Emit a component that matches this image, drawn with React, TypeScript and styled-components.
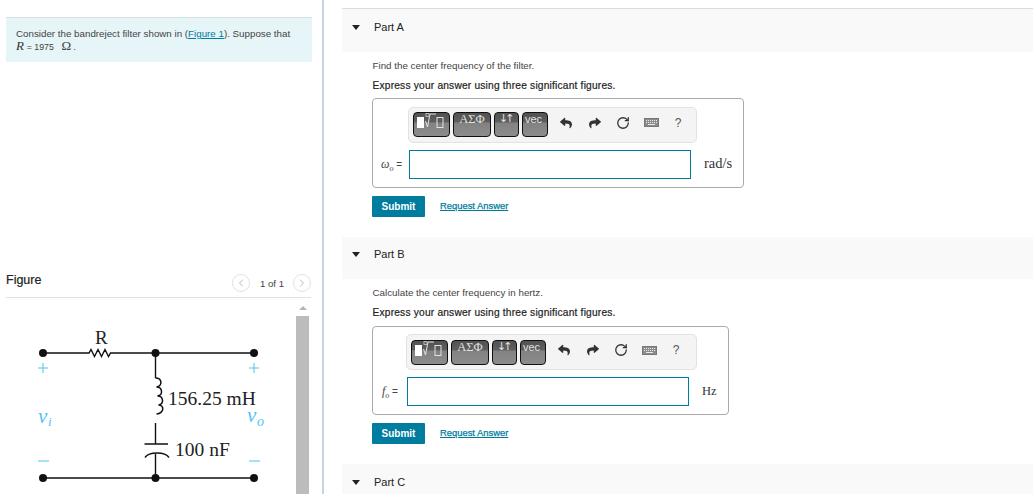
import styled, { createGlobalStyle } from "styled-components";
import { FaReply, FaShare } from "react-icons/fa";
import { ChevronLeft, ChevronRight, RotateCw } from "lucide-react";

const GlobalStyle = createGlobalStyle`
  html, body {
    margin: 0;
    padding: 0;
    height: 494px;
    overflow: hidden;
    background: #fff;
    font-family: "Liberation Sans", Arial, sans-serif;
    color: #333;
  }
`;

const Page = styled.div`
  display: flex;
  height: 494px;
  overflow: hidden;
`;

const LeftColumn = styled.div`
  width: 324px;
  flex: none;
  box-sizing: border-box;
  padding: 17px 11px 0 6px;
  display: flex;
  flex-direction: column;
  border-right: 2px solid #c3d4e4;
`;

const Intro = styled.div`
  height: 45px;
  box-sizing: border-box;
  width: 306px;
  background: #e6f5f7;
  border-top: 1px solid #d8e0e4;
  padding: 10px 10px 0;
  font-size: 9.77px;
  line-height: 12px;
  color: #444;
`;

const Link = styled.a`
  color: #007c9b;
  text-decoration: underline;
`;

const MathVar = styled.i`
  font-family: "Liberation Serif", serif;
  font-size: 13px;
  color: #333;
`;

const MathValue = styled.span`
  font-size: 8.8px;
`;

const Omega = styled.span`
  font-family: "Liberation Serif", serif;
  font-size: 13px;
  margin: 0 2px 0 5px;
`;

const FigureHeader = styled.div`
  margin-top: 206px;
  height: 30px;
  width: 305px;
  box-sizing: border-box;
  flex: none;
  display: flex;
  align-items: flex-start;
  padding-top: 5px;
  border-bottom: 1px solid #dfe3e6;
`;

const FigureTitle = styled.div`
  font-size: 12.5px;
  line-height: 14px;
  color: #222;
  flex: 1;
  -webkit-text-stroke: 0.2px #222;
`;

const Pager = styled.div`
  display: flex;
  align-items: center;
  margin-top: 1px;
  font-size: 9.6px;
  color: #444;
`;

const PagerButton = styled.span`
  width: 18px;
  height: 18px;
  box-sizing: border-box;
  border: 1px solid #e2e2e2;
  border-radius: 50%;
  display: flex;
  align-items: center;
  justify-content: center;
  color: #b9b9b9;
`;

const PagerText = styled.span`
  margin: 0 9px 0 10px;
`;

const FigureBody = styled.div`
  display: flex;
  width: 305px;
  flex: 1;
  min-height: 0;
`;

const CircuitSvg = styled.svg`
  width: 290px;
  height: 196px;
  flex: none;
  display: block;
`;

const ScrollTrack = styled.div`
  width: 13px;
  display: flex;
  flex-direction: column;
  align-items: center;
`;

const ScrollArrow = styled.div`
  width: 0;
  height: 0;
  margin: 8px 0 6px;
  border-left: 4px solid transparent;
  border-right: 4px solid transparent;
  border-bottom: 4px solid #b5b5b5;
`;

const ScrollThumb = styled.div`
  width: 13px;
  flex: 1;
  background: #bcbcbc;
`;

const RightColumn = styled.div`
  flex: 1;
  min-width: 0;
  padding: 8.4px 0 0 18px;
`;

const PartHeader = styled.div<{ $ruled?: boolean }>`
  height: ${(p) => (p.$ruled ? "43.4px" : "42.4px")};
  box-sizing: border-box;
  background: #f9f9f9;
  border-top: ${(p) => (p.$ruled ? "1px solid #dcdcdc" : "none")};
  display: flex;
  align-items: flex-start;
`;

const Caret = styled.span`
  width: 0;
  height: 0;
  margin: 15.5px 14px 0 10px;
  border-left: 4px solid transparent;
  border-right: 4px solid transparent;
  border-top: 5px solid #222;
`;

const PartTitle = styled.span`
  font-size: 11px;
  line-height: 13px;
  margin-top: 11.4px;
  color: #222;
`;

const PartBody = styled.div`
  padding: 7px 0 20.2px 30px;
`;

const Prompt = styled.div`
  font-size: 9.8px;
  line-height: 13px;
  color: #444;
  padding-left: 0.5px;
`;

const Instruction = styled.div`
  margin-top: 7px;
  padding-left: 0.5px;
  font-size: 10.2px;
  line-height: 13px;
  color: #222;
  letter-spacing: 0.2px;
  -webkit-text-stroke: 0.2px #222;
`;

const AnswerBox = styled.div<{ $padLeft: number }>`
  margin-top: 6.4px;
  display: inline-grid;
  grid-template-columns: auto 282px auto;
  column-gap: 7px;
  row-gap: 7px;
  align-items: center;
  border: 1px solid #aaa;
  border-radius: 4px;
  padding: 7.6px 11px 8px ${(p) => p.$padLeft}px;
  vertical-align: top;
`;

const Toolbar = styled.div<{ $width: number }>`
  grid-column: 2 / 4;
  margin-left: -1px;
  width: ${(p) => p.$width}px;
  height: 36px;
  box-sizing: border-box;
  background: #f4f4f4;
  border: 1px solid #e2e2e2;
  border-radius: 5px;
  display: flex;
  align-items: center;
  padding: 0 0 0 4px;
`;

const MathButton = styled.span<{ $width: number; $serif?: boolean }>`
  width: ${(p) => p.$width}px;
  margin-right: 3px;
  height: 25px;
  flex: none;
  box-sizing: border-box;
  border: 1.5px solid #111;
  border-radius: 4px;
  background: linear-gradient(#525252 0, #5e5e5e 38%, #828282 44%, #8c8c8c 100%);
  overflow: hidden;
  display: flex;
  align-items: flex-start;
  padding: 0 0 0 2px;
  color: #e2e2e2;
  font-family: ${(p) => (p.$serif ? '"Liberation Serif", serif' : '"Liberation Sans", sans-serif')};
  font-size: ${(p) => (p.$serif ? "12.5px" : "11px")};
  line-height: 12px;
`;

const ArrowGlyph = styled.span`
  font-family: "DejaVu Sans", sans-serif;
  font-size: 11px;
  letter-spacing: -3px;
  margin-left: 2px;
`;

const TemplateGlyph = styled.svg`
  width: 32px;
  height: 22px;
  display: block;
`;

const ToolIcon = styled.span<{ $width: number }>`
  width: ${(p) => p.$width}px;
  flex: none;
  display: flex;
  justify-content: center;
  align-items: center;
  padding-bottom: 4px;
  color: #333;
  font-size: 12px;
`;

const HelpMark = styled(ToolIcon)`
  color: #555;
`;

const KeysSvg = styled.svg`
  width: 15px;
  height: 9px;
  display: block;
`;

const VarLabel = styled.span<{ $width: number }>`
  width: ${(p) => p.$width}px;
  font-size: 10px;
  color: #444;
  white-space: nowrap;
`;

const VarItalic = styled.i`
  font-family: "Liberation Serif", serif;
  font-size: 12px;
`;

const VarSub = styled.sub`
  font-family: "Liberation Serif", serif;
  font-style: italic;
  font-size: 8px;
  line-height: 0;
`;

const AnswerInput = styled.div`
  height: 29px;
  box-sizing: border-box;
  border: 1px solid #007c9b;
  background: #fff;
`;

const Unit = styled.span<{ $size: number }>`
  margin: 0 0 1px 6px;
  font-family: "Liberation Serif", serif;
  font-size: ${(p) => p.$size}px;
  color: #333;
  white-space: nowrap;
`;

const ActionRow = styled.div`
  margin-top: 7.8px;
  display: flex;
  align-items: center;
`;

const SubmitButton = styled.button`
  width: 53px;
  height: 21px;
  border: none;
  border-radius: 1px;
  background: #007c9f;
  color: #fff;
  padding: 0;
  font-family: "Liberation Sans", sans-serif;
  font-size: 10px;
  font-weight: 700;
`;

const RequestLink = styled(Link)`
  margin: 0 0 2px 15px;
  font-size: 9.4px;
  -webkit-text-stroke: 0.25px #007c9b;
`;

const MathTools = () => (
  <>
    <MathButton $width={37}>
      <TemplateGlyph viewBox="0 0 32 22" aria-hidden="true">
        <rect x="1" y="4" width="7" height="11" fill="#fff" />
        <path d="M9.500 8l2 6 2.500-13h6" fill="none" stroke="#e2e2e2" strokeWidth="1" />
        <rect x="10" y="0.500" width="3" height="3" fill="none" stroke="#cfcfcf" strokeWidth="0.800" />
        <rect x="21" y="4.500" width="6" height="10" fill="none" stroke="#e2e2e2" strokeWidth="1" />
      </TemplateGlyph>
    </MathButton>
    <MathButton $width={38} $serif>
      <span>&nbsp;ΑΣΦ</span>
    </MathButton>
    <MathButton $width={25}>
      <ArrowGlyph>↓↑</ArrowGlyph>
    </MathButton>
    <MathButton $width={26}>
      <span>vec</span>
    </MathButton>
    <ToolIcon $width={30}>
      <FaReply size={12} />
    </ToolIcon>
    <ToolIcon $width={28}>
      <FaShare size={12} />
    </ToolIcon>
    <ToolIcon $width={28}>
      <RotateCw size={14} strokeWidth={2.2} />
    </ToolIcon>
    <ToolIcon $width={28}>
      <KeysSvg viewBox="0 0 15 9" aria-hidden="true">
        <rect x="0.500" y="0.500" width="14" height="8" fill="#8c8c8c" stroke="#777" />
        <path d="M2 2.500h11M2 4.500h11" stroke="#e8e8e8" strokeWidth="1" strokeDasharray="1 1" />
        <path d="M4 6.500h7" stroke="#e8e8e8" strokeWidth="1" />
      </KeysSvg>
    </ToolIcon>
    <HelpMark $width={26}>?</HelpMark>
  </>
);

const Circuit = () => (
  <CircuitSvg viewBox="6 298 290 196">
    <g stroke="#111" strokeWidth="1.400" fill="none">
      <path d="M43 353H89l2-3.500 3.500 7 3.500-7 3.500 7 3.500-7 3.500 7 2-3.500H254" />
      <path d="M155.500 353V378" />
      <path d="M155.500 378c7 0 7 8 1 9 6 0 7 8 1 9 6 0 7 8 1 9 6 0 6 8-2 9" strokeWidth="1.500" />
      <path d="M155.500 423V444M144.500 444H168M145 457.500c4-6 20-6 24 0M155.500 453V478M43 478H254" />
    </g>
    <g fill="#111">
      <circle cx="43" cy="353" r="4" />
      <circle cx="155.500" cy="353" r="4" />
      <circle cx="254" cy="353" r="4" />
      <circle cx="43" cy="478" r="4" />
      <circle cx="155.500" cy="478" r="4" />
      <circle cx="254" cy="478" r="4" />
    </g>
    <g fontFamily="'Liberation Serif', serif" fill="#222">
      <text x="95" y="344" fontSize="19">R</text>
      <text x="168" y="405" fontSize="19.500">156.25 mH</text>
      <text x="175" y="456" fontSize="19.500">100 nF</text>
    </g>
    <path
      d="M38 368H48M43 363V373M249 368H259M254 363V373M38 461H49M249 461H260"
      stroke="#4fc3f0"
      strokeWidth="1"
    />
    <g fontFamily="'Liberation Serif', serif" fontStyle="italic" fill="#4fc3f0">
      <text x="38" y="423" fontSize="21">v</text>
      <text x="48" y="426" fontSize="13">i</text>
      <text x="247" y="422" fontSize="21">v</text>
      <text x="257" y="426" fontSize="14">o</text>
    </g>
  </CircuitSvg>
);

export default function App() {
  return (
    <Page>
      <GlobalStyle />
      <LeftColumn>
        <Intro>
          Consider the bandreject filter shown in (<Link href="#">Figure 1</Link>). Suppose that
          <br />
          <MathVar>R</MathVar> <MathValue>= 1975</MathValue> <Omega>Ω</Omega>.
        </Intro>
        <FigureHeader>
          <FigureTitle>Figure</FigureTitle>
          <Pager>
            <PagerButton>
              <ChevronLeft size={12} />
            </PagerButton>
            <PagerText>1 of 1</PagerText>
            <PagerButton>
              <ChevronRight size={12} />
            </PagerButton>
          </Pager>
        </FigureHeader>
        <FigureBody>
          <Circuit />
          <ScrollTrack>
            <ScrollArrow />
            <ScrollThumb />
          </ScrollTrack>
        </FigureBody>
      </LeftColumn>
      <RightColumn>
        <PartHeader $ruled>
          <Caret />
          <PartTitle>Part A</PartTitle>
        </PartHeader>
        <PartBody>
          <Prompt>Find the center frequency of the filter.</Prompt>
          <Instruction>Express your answer using three significant figures.</Instruction>
          <AnswerBox $padLeft={8}>
            <Toolbar $width={289}>
              <MathTools />
            </Toolbar>
            <VarLabel $width={21}>
              <VarItalic>ω</VarItalic>
              <VarSub>o</VarSub> =
            </VarLabel>
            <AnswerInput />
            <Unit $size={14.5}>rad/s</Unit>
          </AnswerBox>
          <ActionRow>
            <SubmitButton>Submit</SubmitButton>
            <RequestLink href="#">Request Answer</RequestLink>
          </ActionRow>
        </PartBody>
        <PartHeader>
          <Caret />
          <PartTitle>Part B</PartTitle>
        </PartHeader>
        <PartBody>
          <Prompt>Calculate the center frequency in hertz.</Prompt>
          <Instruction>Express your answer using three significant figures.</Instruction>
          <AnswerBox $padLeft={9}>
            <Toolbar $width={291}>
              <MathTools />
            </Toolbar>
            <VarLabel $width={18}>
              <VarItalic>f</VarItalic>
              <VarSub>o</VarSub> =
            </VarLabel>
            <AnswerInput />
            <Unit $size={12.5}>Hz</Unit>
          </AnswerBox>
          <ActionRow>
            <SubmitButton>Submit</SubmitButton>
            <RequestLink href="#">Request Answer</RequestLink>
          </ActionRow>
        </PartBody>
        <PartHeader>
          <Caret />
          <PartTitle>Part C</PartTitle>
        </PartHeader>
      </RightColumn>
    </Page>
  );
}
